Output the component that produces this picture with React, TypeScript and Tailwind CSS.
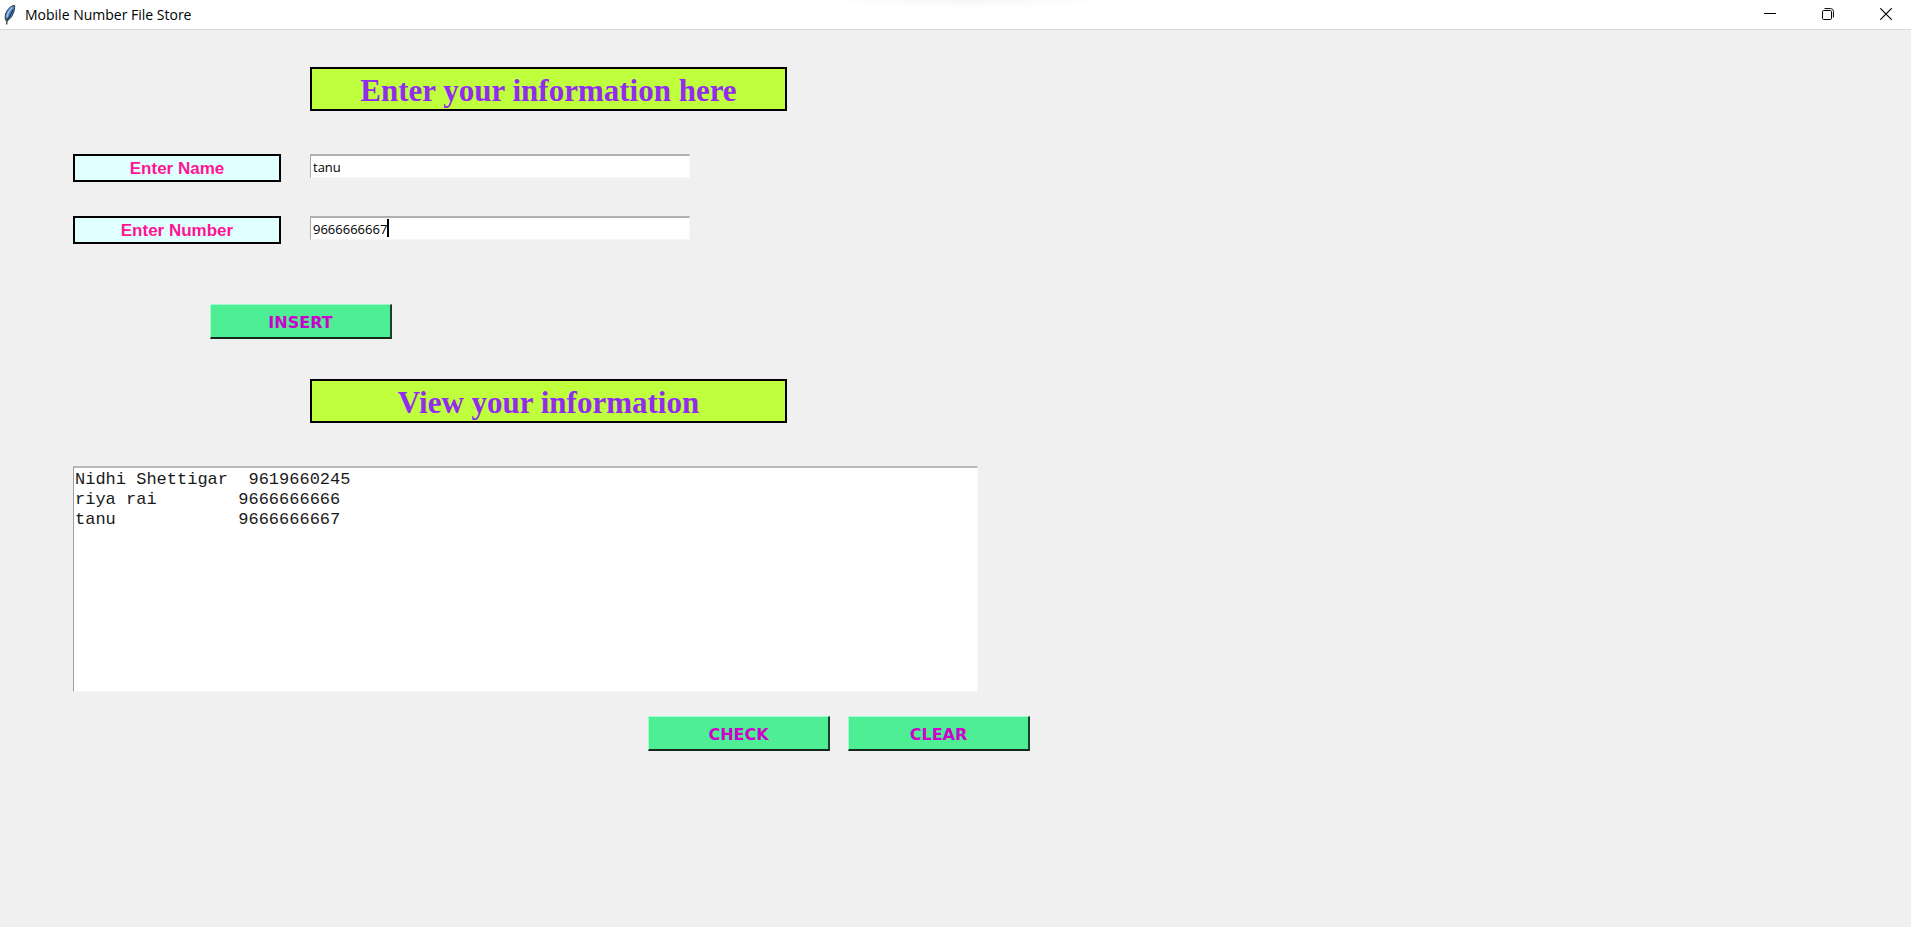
import { useState } from "react";
import type { ReactNode } from "react";

const records = [
  "Nidhi Shettigar  9619660245",
  "riya rai        9666666666",
  "tanu            9666666667",
].join("\n");

function FeatherIcon() {
  return (
    <svg width="12" height="20" viewBox="0 0 12 20" aria-hidden="true">
      <path
        d="M10.6 0.500C8 .4 5.200 2.500 3.200 5.600C1.400 8.500 .8 12 1.300 14.200L2.500 16.200C5.500 14.800 8.300 11.500 9.300 8.200C10.100 6.600 10.900 3 10.600 .5Z"
        fill="#4f86c6"
        stroke="#2b3442"
        strokeWidth="1"
      />
      <path d="M8.200 2.500C5.500 5 3.600 8.500 3 12" stroke="#9cc4f0" strokeWidth="1.500" fill="none" />
      <path d="M9 4.500C7.500 8.500 5.200 12.500 3.200 15" stroke="#24364f" strokeWidth="1.200" fill="none" />
      <path d="M3.400 13.500L2.600 19.500" stroke="#3a3a3a" strokeWidth="1.300" fill="none" />
    </svg>
  );
}

function Heading({ children }: { children: ReactNode }) {
  return (
    <h2 className="ml-[310px] flex h-11 w-[477px] items-center justify-center border-2 border-black bg-[#c0ff3e] pt-[3px] font-['Liberation_Serif',serif] text-[31px] leading-9 font-bold text-[#912cee]">
      {children}
    </h2>
  );
}

function Field({ id, label, children }: { id: string; label: string; children: ReactNode }) {
  return (
    <div className="flex items-start gap-[29px] pl-[73px]">
      <label
        htmlFor={id}
        className="flex h-7 w-52 items-center justify-center border-2 border-black bg-[#e0ffff] pt-px font-['Liberation_Sans',sans-serif] text-[17px] leading-5 font-bold text-[#ff1493]"
      >
        {label}
      </label>
      <div className="relative w-[380px]">{children}</div>
    </div>
  );
}

const inputClass =
  "block h-6 w-full border-t-2 border-r border-b border-l border-t-[#b0b0b0] border-r-[#f6f6f6] border-b-[#f6f6f6] border-l-[#a9a9a9] bg-white pl-0.5 font-['Open_Sans',sans-serif] text-[13px] leading-5 text-black outline-none";

function ActionButton({ children, onClick }: { children: ReactNode; onClick?: () => void }) {
  return (
    <button
      type="button"
      onClick={onClick}
      className="h-[35px] w-[182px] border-t border-r-2 border-b-2 border-l border-t-[#a4ffd0] border-r-[#1c3d2b] border-b-[#14281d] border-l-[#a4ffd0] bg-[#4eee94] pt-[3px] font-['DejaVu_Sans',sans-serif] text-base leading-5 font-bold text-[#cd00cd]"
    >
      {children}
    </button>
  );
}

export default function App() {
  const [name, setName] = useState("tanu");
  const [number, setNumber] = useState("9666666667");
  const [list, setList] = useState(records);

  return (
    <div className="flex min-h-screen flex-col bg-[#f0f0f0]">
      <header className="relative flex h-[30px] items-center border-b border-[#d6dada] bg-white pl-1">
        <div className="absolute top-0 left-[43%] h-2 w-[290px] bg-[radial-gradient(ellipse_at_top,#f6f6f6,#ffffff_70%)]" />
        <FeatherIcon />
        <h1 className="ml-[9px] flex-1 font-['Open_Sans',sans-serif] text-sm leading-5 text-black">
          Mobile Number File Store
        </h1>
        <div className="flex h-full gap-2 pb-0.5">
          <button type="button" aria-label="Minimize" className="flex w-[50px] items-center justify-center">
            <svg width="12" height="12" viewBox="0 0 12 12" aria-hidden="true">
              <path d="M0 5.500H12" stroke="#000" />
            </svg>
          </button>
          <button type="button" aria-label="Restore" className="flex w-[50px] items-center justify-center">
            <svg width="12" height="12" viewBox="0 0 12 12" fill="none" stroke="#000" aria-hidden="true">
              <rect x=".5" y="2.500" width="9" height="9" rx="1.200" />
              <path d="M2.500 .6H8.500C10.400 .6 11.400 1.600 11.400 3.500V9.500" />
            </svg>
          </button>
          <button type="button" aria-label="Close" className="flex w-[50px] items-center justify-center">
            <svg width="12" height="12" viewBox="0 0 12 12" stroke="#000" strokeWidth="1.200" aria-hidden="true">
              <path d="M.3 .3L11.700 11.700M11.700 .3L.3 11.700" />
            </svg>
          </button>
        </div>
      </header>

      <main className="pt-[37px]">
        <Heading>Enter your information here</Heading>

        <div className="mt-[43px] flex flex-col gap-[34px]">
          <Field id="name" label="Enter Name">
            <input id="name" className={inputClass} value={name} onChange={(e) => setName(e.target.value)} />
          </Field>
          <Field id="number" label="Enter Number">
            <input id="number" className={inputClass} value={number} onChange={(e) => setNumber(e.target.value)} />
            <span className="absolute top-[3px] left-[77px] h-[18px] w-0.5 bg-black" />
          </Field>
        </div>

        <div className="mt-[60px] mb-10 pl-[210px]">
          <ActionButton>INSERT</ActionButton>
        </div>

        <Heading>View your information</Heading>

        <div className="mt-[43px] pl-[73px]">
          <textarea
            aria-label="Stored numbers"
            className="block h-[226px] w-[905px] resize-none border-t-2 border-r border-b border-l border-t-[#b8b8b8] border-r-[#f6f6f6] border-b-[#f6f6f6] border-l-[#a0a0a0] bg-white pt-0.5 pl-px font-['Liberation_Mono',monospace] text-[17px] leading-5 text-[#1a1a1a] outline-none"
            value={list}
            onChange={(e) => setList(e.target.value)}
          />
        </div>

        <div className="mt-6 flex gap-[18px] pl-[648px]">
          <ActionButton onClick={() => setList(records)}>CHECK</ActionButton>
          <ActionButton onClick={() => setList("")}>CLEAR</ActionButton>
        </div>
      </main>
    </div>
  );
}
